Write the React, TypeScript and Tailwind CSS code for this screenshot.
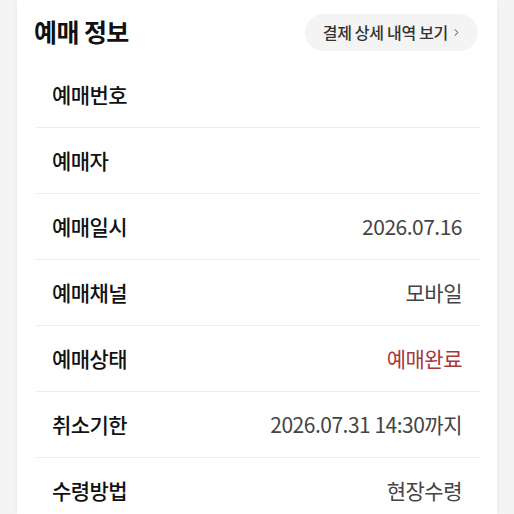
import { ChevronRight } from "lucide-react";

const rows: { label: string; value: string; tone?: "red" }[] = [
  { label: "예매번호", value: "" },
  { label: "예매자", value: "" },
  { label: "예매일시", value: "2026.07.16" },
  { label: "예매채널", value: "모바일" },
  { label: "예매상태", value: "예매완료", tone: "red" },
  { label: "취소기한", value: "2026.07.31 14:30까지" },
  { label: "수령방법", value: "현장수령" },
];

export default function App() {
  return (
    <div
      className="h-[514px] w-[514px] overflow-hidden bg-[#f4f4f4] px-[17px]"
      style={{ fontFamily: '"Noto Sans CJK KR", "Noto Sans", sans-serif' }}
    >
      <div className="h-full bg-white pl-[17px] pr-[17px] shadow-[0_0_4px_rgba(0,0,0,0.06)]">
        <div className="flex h-[62px] items-center justify-between pt-[2px]">
          <h2 className="text-[25px] font-bold tracking-[-0.6px] text-[#111]">
            예매 정보
          </h2>
          <button
            type="button"
            className="mr-[2px] flex h-[37px] items-center gap-[3px] rounded-full bg-[#f4f4f4] pl-[18px] pr-[16px] text-[16px] font-medium tracking-[-0.3px] text-[#333]"
          >
            결제 상세 내역 보기
            <ChevronRight className="h-[11px] w-[11px]" strokeWidth={2} />
          </button>
        </div>

        <div className="ml-[2px]">
          {rows.map((r, i) => (
            <div
              key={r.label}
              className={`flex h-[66px] items-center justify-between pl-[16px] pr-[18px] ${
                i < rows.length - 1 ? "border-b border-[#ececec]" : ""
              }`}
            >
              <span className="text-[21px] font-medium tracking-[-0.6px] text-[#111]">
                {r.label}
              </span>
              <span
                className={`text-[21px] tracking-[-0.5px] ${
                  r.tone === "red" ? "text-[#a7393c]" : "text-[#444]"
                }`}
              >
                {r.value}
              </span>
            </div>
          ))}
        </div>
      </div>
    </div>
  );
}
